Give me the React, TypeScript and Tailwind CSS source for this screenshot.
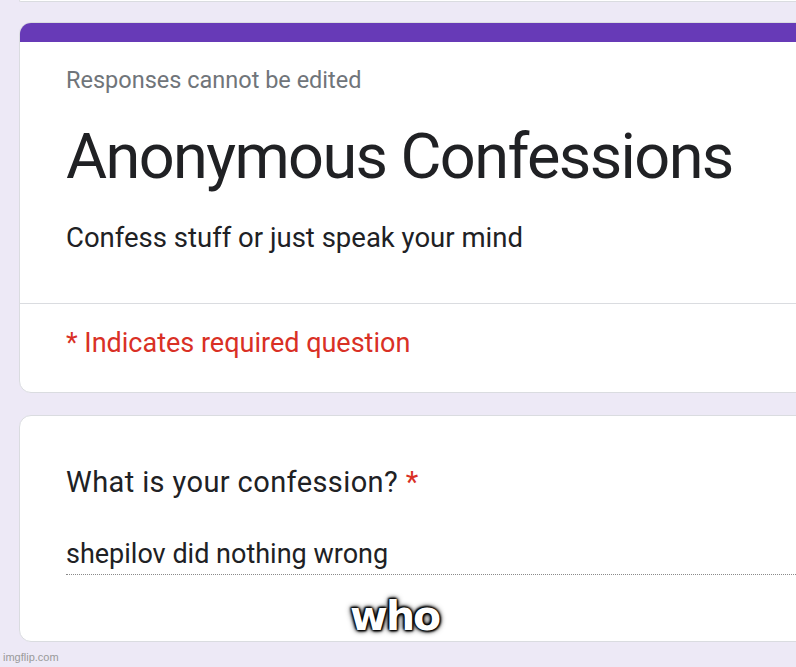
export default function App() {
  return (
    <div className="relative h-[667px] w-[796px] overflow-hidden bg-[#ede9f6] font-['Roboto',sans-serif] text-[#202124]">
      {/* bottom edge of the card above */}
      <div className="ml-[19px] h-[2px] rounded-bl-[12px] border-b border-l border-[#dadce0] bg-white" />

      {/* header card */}
      <div className="ml-[19px] mt-[20px] w-[800px] overflow-hidden rounded-[12px] border border-[#dadce0] bg-white">
        <div className="-mx-px -mt-px h-[20px] bg-[#673ab7]" />
        <div className="pl-[46px] pt-[24px] pb-[49px]">
          <div className="text-[23.5px] leading-[28px] text-[#70757a]">Responses cannot be edited</div>
          <h1 className="mt-[25px] text-[63px] leading-[76px] tracking-[-1.6px]">Anonymous Confessions</h1>
          <p className="mt-[27px] text-[27.5px] leading-[32px]">Confess stuff or just speak your mind</p>
        </div>
        <div className="h-px bg-[#dadce0]" />
        <div className="pl-[46px] pt-[23px] pb-[33px] text-[27px] leading-[32px] text-[#d93025]">
          * Indicates required question
        </div>
      </div>

      {/* question card */}
      <div className="ml-[19px] mt-[22px] w-[800px] rounded-[12px] border border-[#dadce0] bg-white pl-[46px] pt-[48px] pb-[66px]">
        <div className="text-[29px] leading-[36px] tracking-[0.4px]">
          What is your confession? <span className="text-[#d93025]">*</span>
        </div>
        <div className="mt-[38px] border-b border-dotted border-[#8a8a8a] pb-[4px] text-[27px] leading-[32px]">
          shepilov did nothing wrong
        </div>
      </div>

      {/* meme caption */}
      <div className="absolute left-[350px] top-[593px] font-['DejaVu_Sans',sans-serif] text-[41px] font-bold leading-[46px] tracking-[-2px] text-white [text-shadow:0_0_2px_#000,0_0_3px_#000,0_0_4px_#000,0_0_6px_#000,1px_1px_2px_#000,-1px_-1px_2px_#000]">
        who
      </div>
      <div className="absolute bottom-[3px] left-[3px] font-['Liberation_Sans',sans-serif] text-[11px] leading-[13px] text-[#9a9a9a]">
        imgflip.com
      </div>
    </div>
  );
}
